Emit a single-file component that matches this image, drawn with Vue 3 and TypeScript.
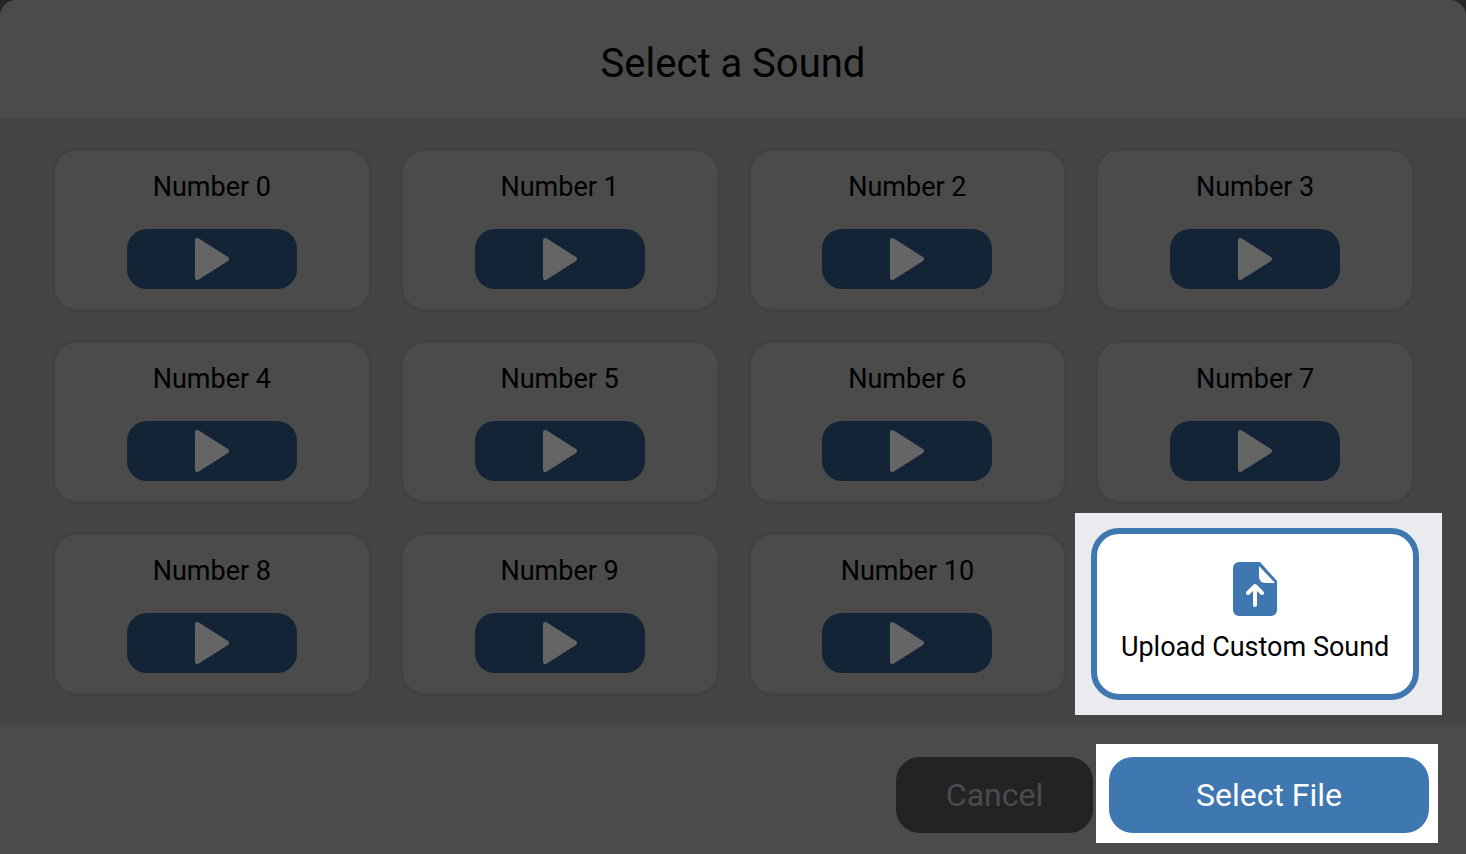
<template>
  <div class="modal">
    <header class="modal-header">
      <h1 class="modal-title">Select a Sound</h1>
    </header>

    <section class="modal-body">
      <div class="sound-grid">
        <div v-for="sound in sounds" :key="sound" class="sound-card">
          <div class="sound-name">{{ sound }}</div>
          <button class="play-button" type="button" :aria-label="`Play ${sound}`">
            <svg class="play-icon" viewBox="0 0 36 44">
              <path d="M1 3.2C1 1.2 2.8.3 4.4 1.3L34 20c1.5 1 1.5 3 0 4L4.4 42.7C2.8 43.7 1 42.8 1 40.8Z" />
            </svg>
          </button>
        </div>

        <div class="upload-slot">
          <button class="upload-card" type="button">
            <svg class="upload-icon" viewBox="0 0 44 54">
              <path class="file-body" d="M6 0H27L44 19V48a6 6 0 0 1-6 6H6a6 6 0 0 1-6-6V6a6 6 0 0 1 6-6Z" />
              <path class="file-fold" d="M26 4 42 21H32a6 6 0 0 1-6-6Z" />
              <path class="file-arrow" d="M22 43V24M15 31l7-7 7 7" />
            </svg>
            <span class="upload-label">Upload Custom Sound</span>
          </button>
        </div>
      </div>
    </section>

    <footer class="modal-footer">
      <button class="btn btn-cancel" type="button">Cancel</button>
      <button class="btn btn-select" type="button">Select File</button>
    </footer>
  </div>
</template>

<script setup lang="ts">
const sounds: string[] = Array.from({ length: 11 }, (_, i) => `Number ${i}`)
</script>

<style>
html,
body {
  margin: 0;
  background: #262626;
}
</style>

<style scoped>
.modal {
  width: 1466px;
  height: 854px;
  overflow: hidden;
  display: flex;
  flex-direction: column;
  background: #4b4b4b;
  border-radius: 16px 16px 0 0;
  font-family: Roboto, 'Liberation Sans', sans-serif;
  color: #000;
}

.modal-header {
  height: 118px;
  display: flex;
  align-items: center;
  justify-content: center;
  flex-shrink: 0;
}

.modal-title {
  margin: 0;
  font-size: 40px;
  font-weight: 400;
  line-height: 48px;
  padding-top: 9px;
}

.modal-body {
  height: 607px;
  box-sizing: border-box;
  padding: 30px 51px 0 52px;
  background: #454547;
  flex-shrink: 0;
}

.sound-grid {
  display: grid;
  grid-template-columns: repeat(4, 1fr);
  grid-auto-rows: 164px;
  gap: 28px;
}

.sound-card {
  box-sizing: border-box;
  border: 3px solid #424243;
  border-radius: 24px;
  background: #4b4b4b;
  padding-top: 21px;
  display: flex;
  flex-direction: column;
  align-items: center;
  gap: 27px;
}

.sound-name {
  font-size: 27px;
  line-height: 30px;
}

.play-button {
  width: 170px;
  height: 60px;
  padding: 0;
  border: 0;
  border-radius: 20px;
  background: #122436;
  display: flex;
  align-items: center;
  justify-content: center;
}

.play-icon {
  width: 36px;
  height: 44px;
  fill: #656565;
}

.upload-slot {
  position: relative;
}

.upload-slot::before {
  content: '';
  position: absolute;
  inset: -19px -27px -19px -20px;
  background: #e9ebef;
}

.upload-card {
  position: absolute;
  inset: -4px;
  box-sizing: border-box;
  border: 6px solid #3f77b1;
  border-radius: 28px;
  background: #fff;
  padding: 28px 0 0;
  display: flex;
  flex-direction: column;
  align-items: center;
  gap: 14px;
  font-family: inherit;
  color: #000;
}

.upload-icon {
  width: 44px;
  height: 54px;
}

.file-body {
  fill: #3f77b1;
}

.file-fold {
  fill: #fff;
}

.file-arrow {
  fill: none;
  stroke: #fff;
  stroke-width: 4;
  stroke-linecap: round;
  stroke-linejoin: round;
}

.upload-label {
  font-size: 27px;
  line-height: 34px;
  white-space: nowrap;
}

.modal-footer {
  flex: 1;
  display: flex;
  justify-content: flex-end;
  align-items: flex-start;
  gap: 16px;
  padding: 32px 37px 0 0;
}

.btn {
  height: 76px;
  border: 0;
  border-radius: 24px;
  font-family: inherit;
  font-size: 32px;
  padding: 0;
}

.btn-cancel {
  width: 197px;
  background: #232325;
  color: #4b4b4d;
}

.btn-select {
  position: relative;
  width: 320px;
  background: #3f77b1;
  color: #fff;
}

.btn-select::before {
  content: '';
  position: absolute;
  inset: -13px -9px -10px -13px;
  background: #fff;
  z-index: -1;
}

.modal-footer {
  position: relative;
  z-index: 0;
}
</style>
